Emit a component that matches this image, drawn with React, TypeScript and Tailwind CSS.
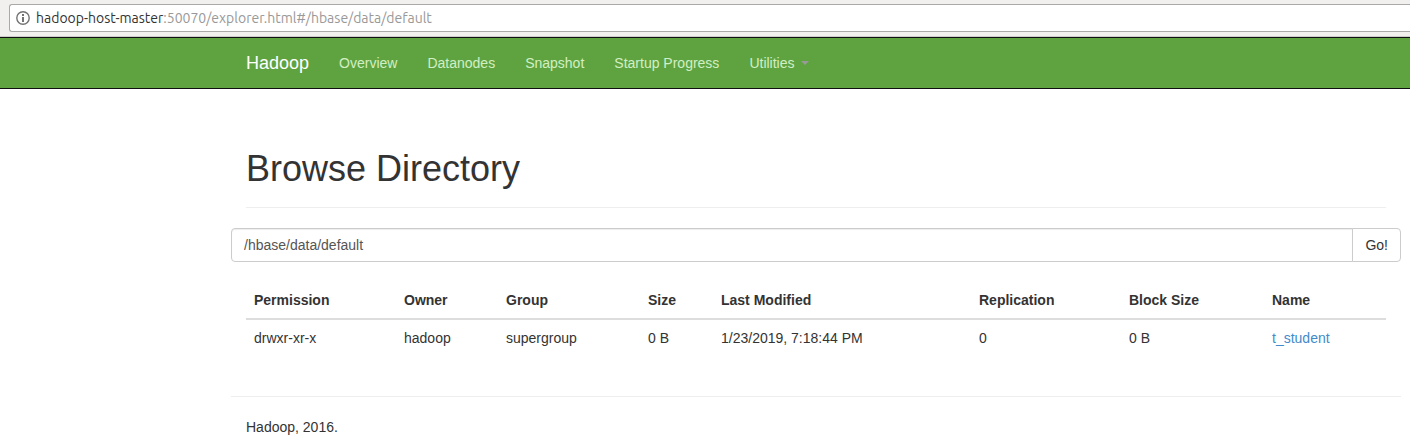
import { useState } from "react";

const navItems = ["Overview", "Datanodes", "Snapshot", "Startup Progress"];

const columns = [
  { label: "Permission", width: "w-[150px]" },
  { label: "Owner", width: "w-[102px]" },
  { label: "Group", width: "w-[142px]" },
  { label: "Size", width: "w-[73px]" },
  { label: "Last Modified", width: "w-[258px]" },
  { label: "Replication", width: "w-[150px]" },
  { label: "Block Size", width: "w-[143px]" },
  { label: "Name", width: "w-[122px]" },
];

const files = [
  {
    name: "t_student",
    cells: ["drwxr-xr-x", "hadoop", "supergroup", "0 B", "1/23/2019, 7:18:44 PM", "0", "0 B"],
  },
];

function AddressBar() {
  return (
    <div className="border-b border-[#cfcdcb] bg-[#f1f0ee] pt-1 pb-1 pl-[9px]">
      <div className="flex h-7 items-center gap-[6px] rounded-l-[3px] border border-r-0 border-[#aaa9a7] bg-white pl-[6px] font-[Ubuntu,Roboto,sans-serif] text-sm leading-5">
        <svg className="size-[14px] shrink-0" viewBox="0 0 14 14" fill="none" aria-hidden="true">
          <circle cx="7" cy="7" r="6.2" stroke="#737373" strokeWidth="1.4" />
          <rect x="6" y="3" width="2" height="2" fill="#737373" />
          <rect x="6" y="6" width="2" height="5" fill="#737373" />
        </svg>
        <span className="whitespace-nowrap text-[#999]">
          <span className="text-[#333]">hadoop-host-master</span>
          :50070/explorer.html#/hbase/data/default
        </span>
      </div>
    </div>
  );
}

function NavBar() {
  return (
    <nav className="border-y border-[#101010] bg-[#5fa341]">
      <div className="mr-[9px] ml-auto flex max-w-[1170px] items-center">
        <a href="#" className="px-[15px] py-[15px] text-lg leading-5 text-white">
          Hadoop
        </a>
        <ul className="flex text-sm leading-5 text-[#d2efc4]">
          {navItems.map((item) => (
            <li key={item}>
              <a href="#" className="block px-[15px] py-[15px]">
                {item}
              </a>
            </li>
          ))}
          <li>
            <button type="button" className="flex items-center gap-[6px] px-[15px] py-[15px]">
              Utilities
              <svg className="h-1 w-2" viewBox="0 0 8 4" aria-hidden="true">
                <path d="M0 0h8L4 4z" fill="#999" />
              </svg>
            </button>
          </li>
        </ul>
      </div>
    </nav>
  );
}

export default function App() {
  const [path, setPath] = useState("/hbase/data/default");

  return (
    <div className="bg-white font-['Liberation_Sans',Arial,sans-serif] text-sm leading-5 text-[#333]">
      <AddressBar />
      <NavBar />
      <div className="mr-[9px] ml-auto max-w-[1170px]">
        <main>
          <header className="mx-[15px] mt-[60px] border-b border-[#eee] pb-[18px]">
            <h1 className="text-4xl leading-10 font-medium">Browse Directory</h1>
          </header>
          <form className="mt-5 flex" onSubmit={(e) => e.preventDefault()}>
            <input
              type="text"
              aria-label="Directory path"
              value={path}
              onChange={(e) => setPath(e.target.value)}
              className="h-[34px] min-w-0 flex-1 rounded-l border border-[#ccc] px-3 text-[#555] shadow-[inset_0_1px_1px_rgba(0,0,0,0.075)]"
            />
            <button
              type="submit"
              className="-ml-px h-[34px] rounded-r border border-[#ccc] bg-white px-3"
            >
              Go!
            </button>
          </form>
          <div className="mx-[15px] mt-5">
            <table className="w-full table-fixed border-separate border-spacing-0 text-left">
              <thead>
                <tr>
                  {columns.map((c) => (
                    <th
                      key={c.label}
                      className={`${c.width} border-b-2 border-[#ddd] p-2 font-bold`}
                    >
                      {c.label}
                    </th>
                  ))}
                </tr>
              </thead>
              <tbody>
                {files.map((file) => (
                  <tr key={file.name}>
                    {file.cells.map((cell, i) => (
                      <td key={i} className="p-2">
                        {cell}
                      </td>
                    ))}
                    <td className="p-2">
                      <a href="#" className="text-[#428bca]">
                        {file.name}
                      </a>
                    </td>
                  </tr>
                ))}
              </tbody>
            </table>
          </div>
        </main>
        <footer className="mt-10 border-t border-[#eee] px-[15px] pt-5 pb-[11px]">
          Hadoop, 2016.
        </footer>
      </div>
    </div>
  );
}
